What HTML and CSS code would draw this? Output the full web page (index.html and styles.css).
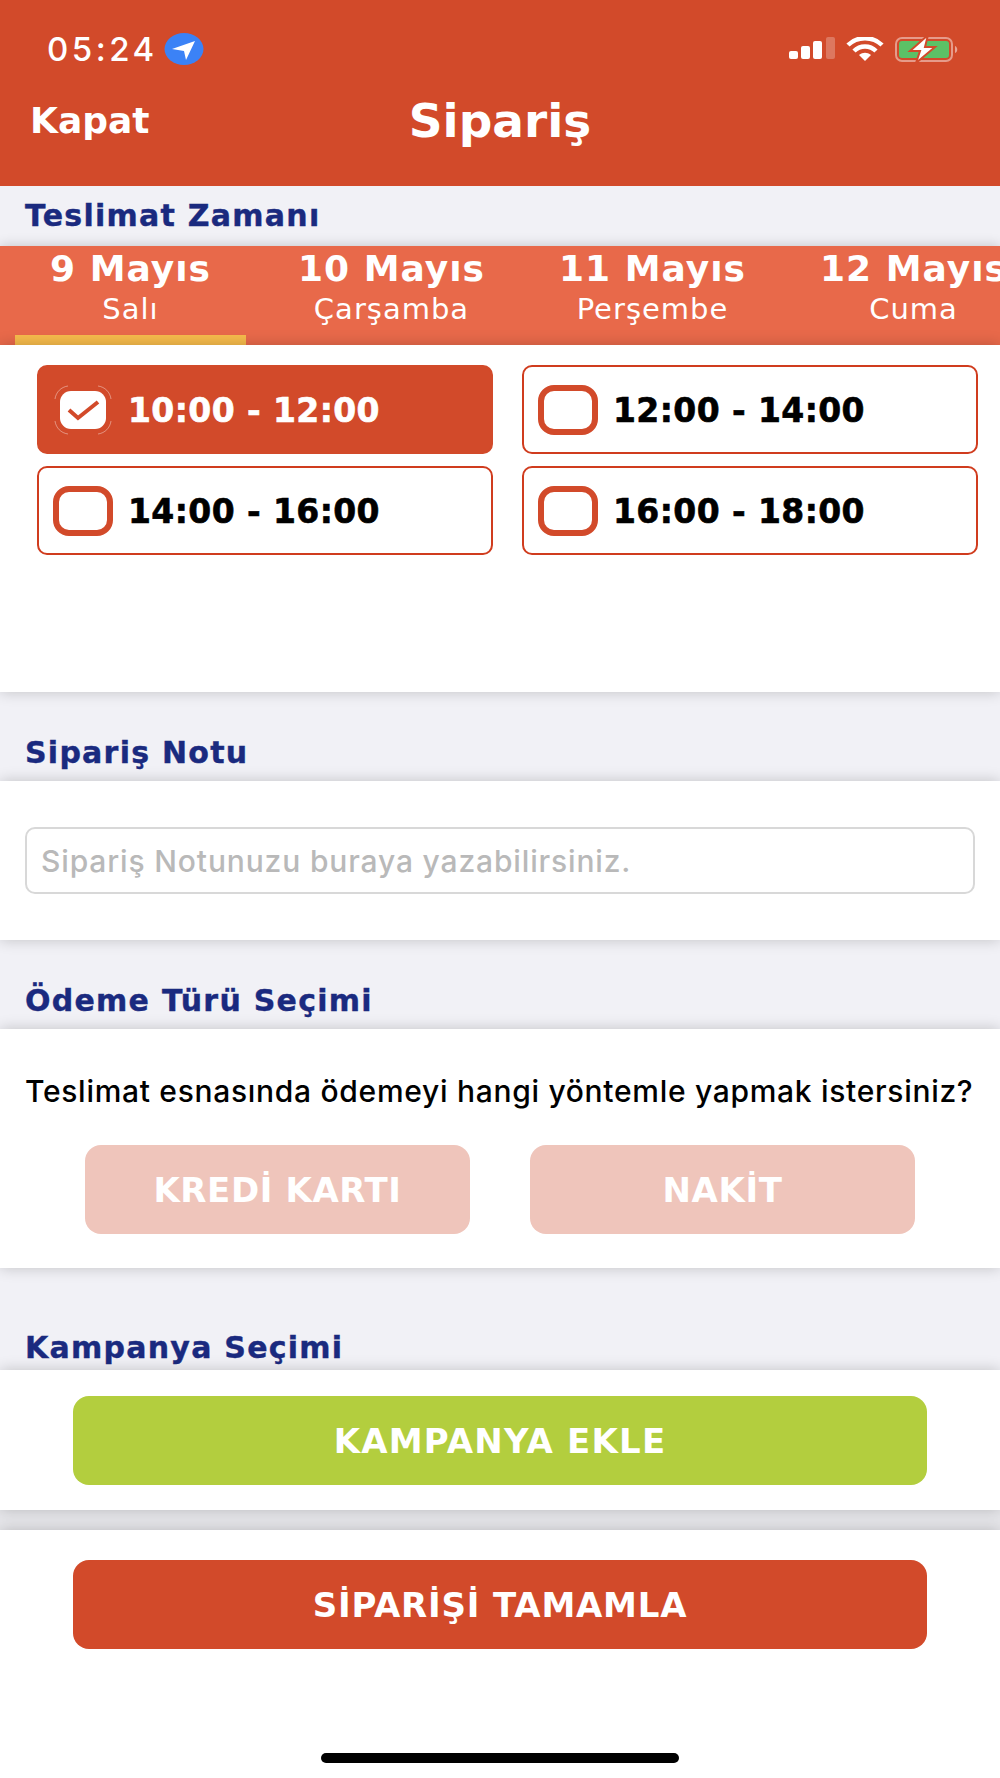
FILE: index.html
```html
<!DOCTYPE html>
<html lang="tr">
<head>
  <meta charset="UTF-8" />
  <meta name="viewport" content="width=device-width, initial-scale=1.0"/>
  <title>Sipariş</title>
  <link rel="stylesheet" href="styles.css">
</head>
<body>
  <header class="app-header">
    <div class="status-bar">
      <div class="status-left">
        <span class="clock">05:24</span>
        <svg class="location" width="40" height="32" viewBox="0 0 40 32">
          <ellipse cx="20" cy="16" rx="19.5" ry="16" fill="#3b82f6"/>
          <path d="M8 16 L31 8 L22 27 L20 18 Z" fill="#fff"/>
        </svg>
      </div>
      <div class="status-right">
        <svg width="46" height="24" viewBox="0 0 46 24">
          <rect x="0" y="14" width="9" height="8" rx="2" fill="#fff"/>
          <rect x="12" y="9" width="9" height="13" rx="2" fill="#fff"/>
          <rect x="24" y="4" width="9" height="18" rx="2" fill="#fff"/>
          <rect x="37" y="0" width="9" height="22" rx="2" fill="#fff" opacity="0.25"/>
        </svg>
        <svg width="38" height="24" viewBox="0 0 38 24">
          <path d="M2 8 C11 -1 27 -1 36 8" fill="none" stroke="#fff" stroke-width="4.5"/>
          <path d="M8 14 C14 8 24 8 30 14" fill="none" stroke="#fff" stroke-width="4.5"/>
          <path d="M13 18 C17 15 21 15 25 18 L19 24 Z" fill="#fff"/>
        </svg>
        <svg width="64" height="28" viewBox="0 0 64 28">
          <rect x="1" y="3" width="56" height="23" rx="6" fill="none" stroke="#fff" stroke-opacity="0.45" stroke-width="2"/>
          <rect x="4" y="6" width="50" height="17" rx="3" fill="#5cc166"/>
          <path d="M60 11 C63 12 63 17 60 18 Z" fill="#fff" opacity="0.5"/>
          <path d="M33 0 L15 16 L25 16 L21 28 L40 12 L30 12 Z" fill="#fff" stroke="#d24a2a" stroke-width="2"/>
        </svg>
      </div>
    </div>
    <div class="nav-row">
      <a class="nav-close">Kapat</a>
      <h1 class="nav-title">Sipariş</h1>
      <span></span>
    </div>
  </header>

  <h2 class="section-title first">Teslimat Zamanı</h2>
  <div class="tabs">
    <div class="tab active"><strong>9 Mayıs</strong><span>Salı</span></div>
    <div class="tab"><strong>10 Mayıs</strong><span>Çarşamba</span></div>
    <div class="tab"><strong>11 Mayıs</strong><span>Perşembe</span></div>
    <div class="tab"><strong>12 Mayıs</strong><span>Cuma</span></div>
  </div>
  <section class="panel slots-panel">
    <div class="slots">
      <div class="slot selected">
        <svg class="check" width="60" height="50" viewBox="0 0 60 50">
          <rect x="7" y="6" width="46" height="38" rx="11" fill="#fff"/>
          <path d="M16 25 L25 33 L45 17" fill="none" stroke="#d24a2a" stroke-width="4"/>
          <path d="M2 14 C3 7 8 2 15 1 M45 1 C52 2 57 7 58 14 M58 36 C57 43 52 48 45 49 M15 49 C8 48 3 43 2 36" fill="none" stroke="#fff" stroke-opacity="0.4" stroke-width="1"/>
        </svg>
        <span>10:00 - 12:00</span>
      </div>
      <div class="slot"><i class="box"></i><span>12:00 - 14:00</span></div>
      <div class="slot"><i class="box"></i><span>14:00 - 16:00</span></div>
      <div class="slot"><i class="box"></i><span>16:00 - 18:00</span></div>
    </div>
  </section>

  <h2 class="section-title">Sipariş Notu</h2>
  <section class="panel note-panel">
    <input class="note-input" type="text" placeholder="Sipariş Notunuzu buraya yazabilirsiniz.">
  </section>

  <h2 class="section-title">Ödeme Türü Seçimi</h2>
  <section class="panel pay-panel">
    <p class="pay-question">Teslimat esnasında ödemeyi hangi yöntemle yapmak istersiniz?</p>
    <div class="pay-buttons">
      <button class="btn btn-pay">KREDİ KARTI</button>
      <button class="btn btn-pay">NAKİT</button>
    </div>
  </section>

  <h2 class="section-title tall">Kampanya Seçimi</h2>
  <section class="panel campaign-panel">
    <button class="btn btn-wide btn-green">KAMPANYA EKLE</button>
  </section>
  <div class="divider"></div>
  <section class="panel submit-panel">
    <button class="btn btn-wide btn-red">SİPARİŞİ TAMAMLA</button>
    <div class="home-bar"></div>
  </section>
</body>
</html>
```

FILE: styles.css
```css
* {
  box-sizing: border-box;
}
body {
  margin: 0;
  background: #f1f1f6;
  font-family: "DejaVu Sans", "Liberation Sans", sans-serif;
  color: #000;
  height: 1778px;
  overflow: hidden;
}
.app-header {
  height: 186px;
  background: #d24a2a;
  color: #fff;
  padding-top: 33px;
}
.status-bar {
  display: flex;
  justify-content: space-between;
  align-items: center;
  height: 32px;
  padding: 0 41px 0 47px;
}
.status-left {
  display: flex;
  align-items: center;
  gap: 6px;
}
.clock {
  font-family: "Inter", sans-serif;
  font-size: 33px;
  font-weight: 500;
  letter-spacing: 3.5px;
}
.status-right {
  display: flex;
  align-items: center;
  gap: 11px;
}
.nav-row {
  display: grid;
  grid-template-columns: 1fr auto 1fr;
  align-items: center;
  margin-top: 28px;
  padding: 0 30px;
}
.nav-close {
  font-size: 36px;
  font-weight: 700;
}
.nav-title {
  margin: 0;
  font-size: 47px;
  font-weight: 700;
}
.section-title {
  margin: 0;
  height: 89px;
  padding: 43px 0 0 25px;
  font-size: 30px;
  line-height: 36px;
  font-weight: 700;
  letter-spacing: 1.25px;
  color: #1a2a7f;
  -webkit-text-stroke: 0.4px #1a2a7f;
}
.section-title.first {
  height: 60px;
  padding-top: 12px;
}
.section-title.tall {
  height: 102px;
  padding-top: 62px;
}
.tabs {
  display: grid;
  grid-template-columns: repeat(4, 261px);
  height: 99px;
  padding-top: 1px;
  background: #e8694a;
  color: #fff;
  overflow: hidden;
  position: relative;
  box-shadow: 0 0 12px rgba(0,0,0,0.2);
}
.tab {
  display: flex;
  flex-direction: column;
  align-items: center;
  margin: 0 15px;
  white-space: nowrap;
}
.tab strong {
  font-size: 36px;
  line-height: 44px;
  font-weight: 700;
  letter-spacing: 1px;
}
.tab span {
  font-size: 29px;
  line-height: 36px;
  letter-spacing: 1px;
}
.tab.active {
  border-bottom: 10px solid #f6bb4c;
}
.panel {
  background: #fff;
  position: relative;
  box-shadow: 0 0 14px rgba(0,0,0,0.2);
}
.slots-panel {
  height: 347px;
  padding: 20px 22px 0 37px;
}
.slots {
  display: grid;
  grid-template-columns: 456px 456px;
  grid-auto-rows: 89px;
  gap: 12px 29px;
}
.slot {
  display: flex;
  align-items: center;
  gap: 15px;
  padding: 2px 0 0 14px;
  border: 2px solid #d03c1e;
  border-radius: 10px;
  font-size: 33px;
  font-weight: 700;
  letter-spacing: 0.4px;
  -webkit-text-stroke: 0.6px currentColor;
}
.slot.selected {
  background: #d24a2a;
  border-color: #d24a2a;
  color: #fff;
}
.box {
  width: 60px;
  height: 50px;
  margin-top: -2px;
  border: 6px solid #d24a2a;
  border-radius: 16px;
}
.check {
  margin-top: -2px;
}
.note-panel {
  height: 159px;
  padding: 46px 25px 0;
}
.note-input {
  display: block;
  width: 950px;
  height: 67px;
  padding: 0 14px;
  border: 2px solid #d8d8d8;
  border-radius: 10px;
  font-family: "Inter", sans-serif;
  font-size: 30px;
  font-weight: 500;
  letter-spacing: 0.85px;
  outline: none;
}
.note-input::placeholder {
  color: #b9b9b9;
}
.pay-panel {
  height: 239px;
  padding-top: 44px;
}
.pay-question {
  margin: 0 0 36px 25px;
  font-family: "Inter", sans-serif;
  font-size: 30px;
  font-weight: 500;
  line-height: 36px;
  letter-spacing: 0.7px;
  white-space: nowrap;
}
.pay-buttons {
  display: flex;
  gap: 60px;
  padding-left: 85px;
}
.btn {
  height: 89px;
  border: none;
  border-radius: 16px;
  color: #fff;
  font-family: "DejaVu Sans", sans-serif;
  font-size: 34px;
  font-weight: 700;
}
.btn-pay {
  width: 385px;
  background: #efc5bb;
  letter-spacing: 0.6px;
}
.campaign-panel {
  height: 140px;
  padding: 26px 73px 0;
}
.btn-wide {
  display: block;
  width: 854px;
}
.btn-green {
  background: #b3ce3e;
  letter-spacing: 1.2px;
}
.divider {
  height: 20px;
  background: #e6e6ea;
}
.btn-red {
  background: #d24a2a;
  letter-spacing: 0.8px;
}
.submit-panel {
  height: 248px;
  padding: 30px 73px 0;
}
.home-bar {
  width: 358px;
  height: 10px;
  margin: 104px 0 0 248px;
  border-radius: 5px;
  background: #000;
}
```
